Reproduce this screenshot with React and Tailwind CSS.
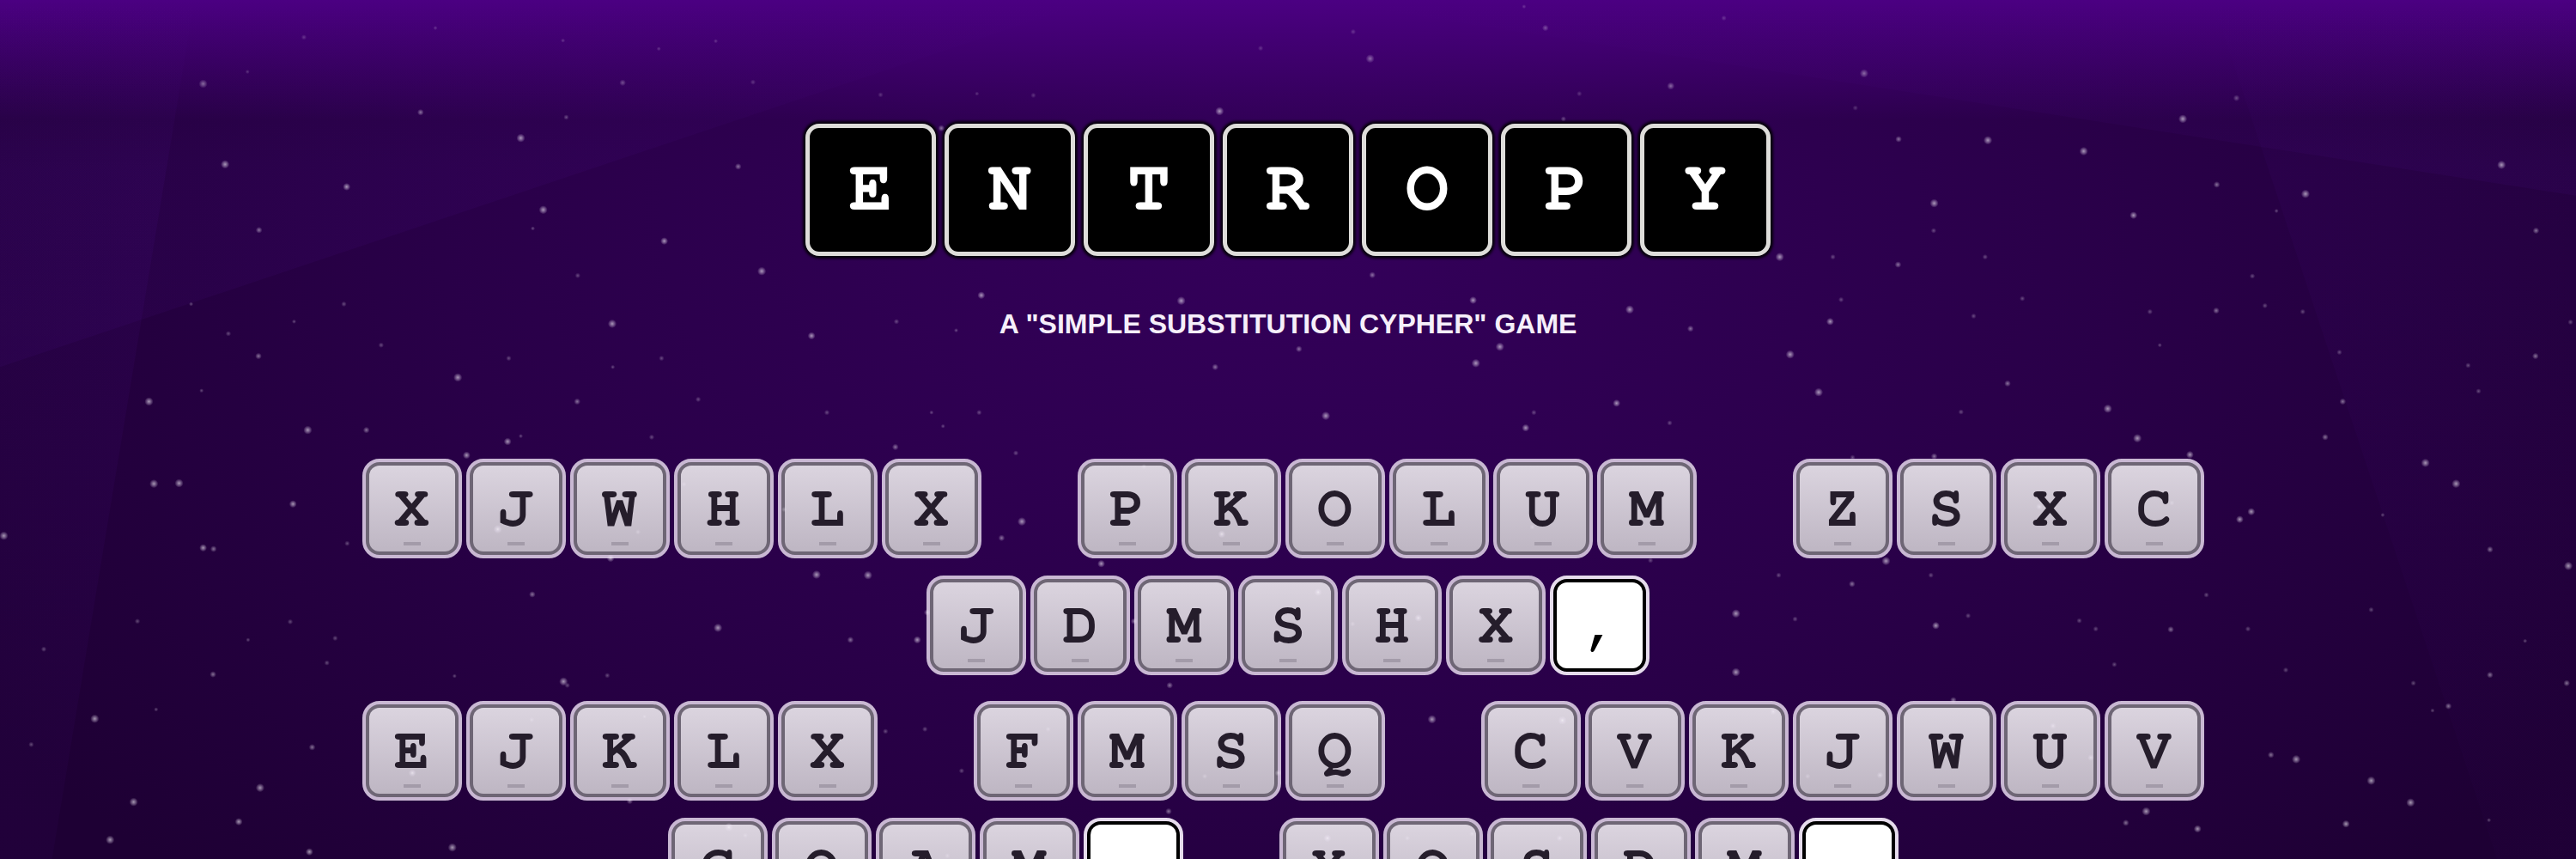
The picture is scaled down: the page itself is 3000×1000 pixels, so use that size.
const TITLE = "ENTROPY";

const LINES = [
  [["XJWHLX", "PKOLUM", "ZSXC"], ["JDMSHX,"]],
  [["EJKLX", "FMSQ", "CVKJWUV"], ["GQAM,", "XOSDM,"]],
];

const SKY = [
  {
    x: 0,
    stars: [
      [371, 153, 6], [555, 68, 3], [795, 51, 2], [452, 131, 2], [768, 205, 4], [951, 252, 6], [1028, 74, 2], [1137, 151, 4],
      [1203, 89, 2], [1307, 75, 2], [1375, 150, 3], [1034, 214, 3], [411, 300, 6], [633, 341, 5], [473, 420, 4], [992, 383, 6],
      [973, 417, 2], [1348, 304, 4], [1213, 440, 5], [1391, 495, 6], [1055, 503, 3], [349, 555, 2], [417, 609, 3], [537, 587, 2],
      [628, 555, 3], [472, 650, 4], [696, 630, 3], [929, 654, 3], [1118, 591, 6], [1119, 670, 2], [1208, 654, 3], [1482, 613, 5],
      [272, 733, 6], [368, 713, 2], [836, 689, 6], [1054, 733, 4], [1275, 729, 3], [1510, 753, 3], [562, 785, 6], [669, 785, 4],
      [927, 806, 5], [951, 796, 2], [1190, 798, 3], [852, 831, 5], [281, 883, 6], [327, 882, 6], [535, 920, 5], [7, 978, 6],
      [371, 1000, 5], [390, 1002, 4], [634, 992, 3], [909, 966, 6], [1165, 971, 3], [1249, 884, 3], [1115, 1019, 5], [972, 1085, 4],
      [1491, 1049, 6], [251, 1134, 3], [530, 1135, 3], [453, 1168, 2], [612, 1165, 3], [80, 1185, 3], [597, 1210, 3], [389, 1231, 4],
      [830, 1234, 2], [1029, 1244, 6], [1036, 1251, 3], [1109, 1233, 3], [1311, 1146, 6], [1553, 1168, 4], [173, 1312, 6], [285, 1295, 2],
      [57, 1359, 3], [570, 1364, 4], [971, 1314, 3], [753, 1411, 5], [1177, 1308, 2], [475, 1438, 6], [244, 1464, 6], [436, 1500, 5],
      [201, 1533, 6], [565, 1555, 5], [826, 1547, 6], [1150, 1462, 4], [1331, 1510, 6], [1361, 1525, 3], [1432, 930, 3],
    ],
  },
  {
    x: 1568,
    stars: [
      [734, 88, 3], [903, 58, 3], [934, 107, 6], [1254, 51, 4], [1215, 12, 2], [1483, 157, 5], [1316, 171, 3], [40, 173, 3],
      [216, 171, 2], [319, 174, 3], [659, 203, 6], [151, 234, 4], [1287, 217, 3], [224, 539, 5], [589, 549, 6], [938, 502, 4],
      [1122, 548, 5], [1408, 565, 6], [1519, 600, 4], [69, 587, 3], [178, 603, 2], [804, 637, 4], [651, 670, 4], [1171, 633, 6],
      [1127, 663, 6], [853, 759, 6], [1384, 736, 5], [1233, 753, 3], [1218, 781, 5], [1481, 772, 3], [133, 753, 2], [220, 753, 3],
      [154, 778, 2], [67, 816, 4], [287, 827, 3], [298, 952, 6], [261, 982, 4], [443, 1029, 5], [17, 1050, 6], [107, 1168, 5],
      [663, 975, 5], [521, 852, 3], [839, 1081, 5], [1022, 1128, 5], [503, 1134, 4], [125, 1118, 4], [902, 1139, 3], [1446, 1023, 3],
      [568, 1251, 4], [1047, 1313, 6], [1285, 1315, 6], [49, 1335, 3], [121, 1331, 3], [188, 1407, 3], [346, 1331, 3], [766, 1411, 4],
      [632, 1417, 3], [566, 1481, 4], [856, 1530, 5], [1002, 1530, 3], [1120, 1522, 3], [1280, 1530, 4], [162, 1562, 3], [1230, 962, 3],
    ],
  },
  {
    x: 3136,
    stars: [
      [12, 33, 3], [268, 134, 6], [252, 197, 3], [331, 254, 4], [494, 256, 6], [669, 276, 6], [850, 217, 6], [948, 179, 4],
      [396, 371, 6], [395, 421, 3], [760, 393, 5], [912, 337, 4], [1074, 354, 6], [1432, 301, 6], [1495, 421, 4], [1021, 385, 2],
      [114, 469, 6], [211, 469, 3], [330, 483, 4], [489, 469, 3], [226, 547, 3], [206, 587, 5], [468, 577, 3], [557, 545, 3],
      [790, 569, 3], [911, 567, 4], [977, 504, 3], [1000, 558, 3], [1069, 569, 3], [1558, 588, 3], [133, 647, 6], [808, 630, 2],
      [1136, 643, 3], [1371, 667, 3], [1494, 650, 4], [1390, 714, 3], [530, 700, 4], [185, 716, 6], [445, 752, 3], [713, 746, 6],
      [1142, 733, 4], [767, 800, 6], [1110, 798, 4], [863, 830, 5], [396, 833, 4], [247, 835, 3], [1293, 845, 6], [1349, 883, 6],
      [975, 934, 5], [954, 948, 5], [1215, 940, 2], [1411, 1003, 4], [1554, 1033, 6], [308, 1024, 6], [112, 1050, 3], [246, 1066, 4],
      [390, 1050, 3], [893, 1086, 3], [34, 1120, 6], [142, 1130, 3], [399, 1142, 5], [458, 1124, 3], [661, 1133, 3], [691, 1148, 3],
      [828, 1149, 4], [969, 1148, 3], [1194, 1113, 3], [1475, 1170, 2], [34, 1227, 6], [725, 1213, 3], [1038, 1223, 3], [1271, 1247, 3],
      [1411, 1232, 4], [1551, 1247, 4], [1335, 1289, 4], [1306, 1297, 2], [431, 1278, 4], [102, 1299, 4], [613, 1325, 4], [682, 1383, 4],
      [297, 1415, 4], [165, 1417, 3], [1011, 1378, 4], [1057, 1386, 6], [1194, 1425, 6], [783, 1481, 6], [1266, 1465, 6], [746, 1502, 4],
      [877, 1513, 5], [1148, 1504, 5], [1409, 1497, 2], [830, 918, 3], [588, 925, 4],
    ],
  },
];

function Beams() {
  return (
    <svg
      aria-hidden="true"
      className="pointer-events-none absolute inset-0 h-full w-full"
      viewBox="0 0 4704 1568"
      preserveAspectRatio="none"
    >
      <defs>
        <linearGradient id="beamLeft" x1="0" y1="0" x2="0" y2="1">
          <stop offset="0" stopColor="#5a12a8" stopOpacity="0" />
          <stop offset="0.2" stopColor="#5a12a8" stopOpacity="0.09" />
          <stop offset="1" stopColor="#5a12a8" stopOpacity="0.05" />
        </linearGradient>
        <linearGradient id="beamRight" x1="0" y1="0" x2="0" y2="1">
          <stop offset="0" stopColor="#5a12a8" stopOpacity="0" />
          <stop offset="0.2" stopColor="#5a12a8" stopOpacity="0.06" />
          <stop offset="1" stopColor="#5a12a8" stopOpacity="0.02" />
        </linearGradient>
        <linearGradient id="beamTop" gradientUnits="userSpaceOnUse" x1="0" y1="0" x2="0" y2="300">
          <stop offset="0" stopColor="#5a12a8" stopOpacity="0" />
          <stop offset="1" stopColor="#5a12a8" stopOpacity="0.08" />
        </linearGradient>
      </defs>
      <path d="M0 0H2000L0 670Z" fill="url(#beamTop)" />
      <path d="M0 0H355L95 1568H0Z" fill="url(#beamLeft)" />
      <path d="M4040 0L4560 1568H4704V0Z" fill="url(#beamRight)" />
      <path d="M2400 0L4704 357V0Z" fill="url(#beamTop)" />
    </svg>
  );
}

function Stars() {
  return (
    <svg
      aria-hidden="true"
      className="pointer-events-none absolute inset-0 h-full w-full"
      viewBox="0 0 4704 1568"
      preserveAspectRatio="xMidYMin slice"
    >
      <defs>
        <radialGradient id="star">
          <stop offset="0" stopColor="#fff" stopOpacity="0.6" />
          <stop offset="0.4" stopColor="#efe6f6" stopOpacity="0.4" />
          <stop offset="1" stopColor="#efe6f6" stopOpacity="0" />
        </radialGradient>
      </defs>
      {SKY.map((part) => (
        <g key={part.x} transform={`translate(${part.x} 0)`} fill="url(#star)">
          {part.stars.map(([x, y, r]) => (
            <circle key={`${x}-${y}`} cx={x} cy={y} r={r + 2} opacity={(r > 4 ? 1 : r > 3 ? 0.75 : 0.5) * (y < 200 ? 0.7 : 1)} />
          ))}
        </g>
      ))}
    </svg>
  );
}

function Key({ char }) {
  if (char === ",") {
    return (
      <span className="flex size-[116px] shrink-0 rounded-[20px] border-4 border-[#e6dcec] bg-black p-1">
        <span className="flex h-full w-full items-center justify-center rounded-xl bg-white text-black">{char}</span>
      </span>
    );
  }
  return (
    <button
      type="button"
      className="flex size-[116px] shrink-0 rounded-[20px] border-4 border-[#c9b8d3] bg-[#6e6675] p-1 text-[#251d2b]"
    >
      <span className="flex h-full w-full flex-col items-center justify-end gap-1 rounded-xl bg-linear-to-b from-[#dbd4df] to-[#beb6c3] pb-[7px]">
        <span className="leading-[70px]">{char}</span>
        <span className="h-1 w-5 bg-[#a39ba9]" />
      </span>
    </button>
  );
}

export default function App() {
  return (
    <main className="relative h-screen overflow-hidden bg-[radial-gradient(ellipse_60%_110%_at_50%_25%,#34005b_0%,#290048_55%,#1e0034_100%)]">
      <div className="absolute inset-x-0 top-0 h-[140px] bg-linear-to-b from-[#4b0082] to-transparent" />
      <Beams />
      <div className="relative flex flex-col items-center pt-[144px]">
        <h1
          aria-label={TITLE}
          className="flex gap-[10px] font-['FreeMono','DejaVu_Serif_Condensed',serif] text-[84px] leading-none font-bold text-white"
        >
          {[...TITLE].map((char, i) => (
            <span
              key={i}
              className="flex h-[154px] w-[152px] items-center justify-center rounded-2xl border-[5px] border-[#deddda] bg-black pb-1 shadow-[0_0_3px_3px_rgba(0,0,0,0.85)]"
            >
              {char}
            </span>
          ))}
        </h1>
        <p className="mt-[57px] font-['Liberation_Sans',sans-serif] text-[32px] leading-[44px] font-bold text-[#f6effa] uppercase">
          A "Simple Substitution Cypher" Game
        </p>
        <section
          aria-label="Cypher"
          className="mt-[135px] flex flex-col gap-[30px] font-['FreeMono','DejaVu_Serif_Condensed',serif] text-[68px] leading-none font-bold"
        >
          {LINES.map((line, l) => (
            <div key={l} className="flex flex-col items-center gap-5">
              {line.map((row, r) => (
                <div key={r} className={row.length > 1 ? "flex gap-[112px] pr-3" : "flex"}>
                  {row.map((word) => (
                    <div key={word} className="flex gap-[5px]">
                      {[...word].map((char, i) => (
                        <Key key={i} char={char} />
                      ))}
                    </div>
                  ))}
                </div>
              ))}
            </div>
          ))}
        </section>
      </div>
      <Stars />
    </main>
  );
}
